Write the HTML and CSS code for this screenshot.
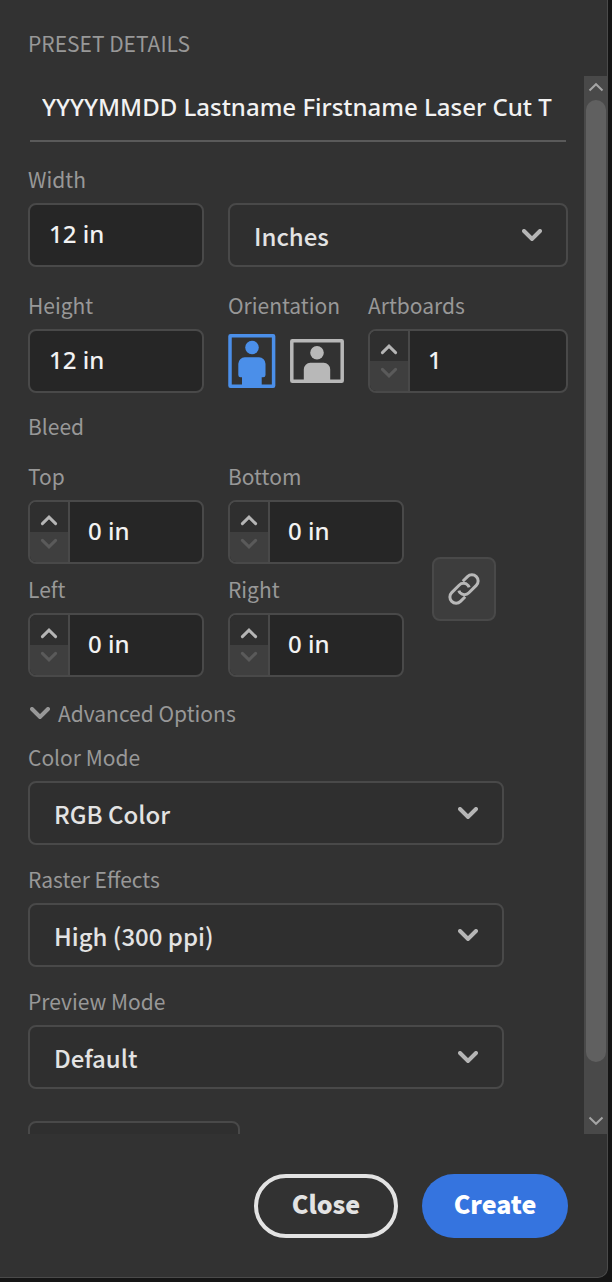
FILE: index.html
```html
<!DOCTYPE html>
<html lang="en">
<head>
<meta charset="utf-8">
<meta name="viewport" content="width=device-width, initial-scale=1">
<title>Preset Details</title>
<link rel="stylesheet" href="styles.css">
</head>
<body>
<svg width="0" height="0" class="symbols" aria-hidden="true">
  <symbol id="chevron" viewBox="0 0 20 12"><path d="M2 2l8 8 8-8"/></symbol>
  <symbol id="step-up" viewBox="0 0 18 12"><path d="M2.400 8.600L9 2.200l6.600 6.400"/></symbol>
  <symbol id="step-down" viewBox="0 0 18 12"><path d="M2.400 2.400L9 8.800l6.600-6.400"/></symbol>
</svg>
<main class="panel">
  <h1 class="panel-title">Preset Details</h1>
  <div class="viewport">
    <form class="form">
      <input class="doc-name" type="text" aria-label="Document name" value="YYYYMMDD Lastname Firstname Laser Cut T">

      <div class="row">
        <div class="field column">
          <label class="label" for="width">Width</label>
          <input class="box" id="width" type="text" value="12 in">
        </div>
        <div class="field grow">
          <div class="select">
            <select id="unit" aria-label="Units"><option>Inches</option></select>
            <svg class="arrow"><use href="#chevron"/></svg>
          </div>
        </div>
      </div>

      <div class="row">
        <div class="field column">
          <label class="label" for="height">Height</label>
          <input class="box" id="height" type="text" value="12 in">
        </div>
        <div class="field">
          <span class="label" id="orientation">Orientation</span>
          <div class="orientation" role="group" aria-labelledby="orientation">
            <button class="icon-button selected" type="button" aria-label="Portrait" aria-pressed="true">
              <svg width="48" height="54" viewBox="0 0 48 54"><rect x="2" y="1.800" width="43.600" height="50.400" rx=".5" fill="none" stroke="currentColor" stroke-width="3.500"/><circle cx="24" cy="13.500" r="6.800"/><path d="M17 23.300h14a6.500 6.500 0 0 1 6.500 6.500V41a2.300 2.300 0 0 1-2.300 2.300h-1.500V52H14v-8.700h-1.500A2.300 2.300 0 0 1 10.300 41V29.800a6.500 6.500 0 0 1 6.700-6.500z"/></svg>
            </button>
            <button class="icon-button" type="button" aria-label="Landscape" aria-pressed="false">
              <svg width="54" height="44" viewBox="0 0 54 44"><rect x="1.800" y="1.800" width="50.400" height="40.400" rx=".5" fill="none" stroke="currentColor" stroke-width="3.500"/><circle cx="27" cy="13.800" r="6.800"/><path d="M20.500 23.800h13.200a6.500 6.500 0 0 1 6.500 6.500V42H13.800V30.300a6.500 6.500 0 0 1 6.700-6.500z"/></svg>
            </button>
          </div>
        </div>
        <div class="field grow">
          <label class="label" for="artboards">Artboards</label>
          <div class="stepper">
            <div class="steps">
              <button type="button" aria-label="More artboards"><svg><use href="#step-up"/></svg></button>
              <button type="button" aria-label="Fewer artboards" disabled><svg><use href="#step-down"/></svg></button>
            </div>
            <input id="artboards" type="text" value="1">
          </div>
        </div>
      </div>

      <div class="bleed" role="group" aria-labelledby="bleed">
        <h2 class="label bleed-title" id="bleed">Bleed</h2>
        <div class="bleed-body">
          <div class="bleed-grid">
            <div class="field column">
              <label class="label" for="top">Top</label>
              <div class="stepper">
                <div class="steps">
                  <button type="button" aria-label="Increase top"><svg><use href="#step-up"/></svg></button>
                  <button type="button" aria-label="Decrease top" disabled><svg><use href="#step-down"/></svg></button>
                </div>
                <input id="top" type="text" value="0 in">
              </div>
            </div>
            <div class="field column">
              <label class="label" for="bottom">Bottom</label>
              <div class="stepper">
                <div class="steps">
                  <button type="button" aria-label="Increase bottom"><svg><use href="#step-up"/></svg></button>
                  <button type="button" aria-label="Decrease bottom" disabled><svg><use href="#step-down"/></svg></button>
                </div>
                <input id="bottom" type="text" value="0 in">
              </div>
            </div>
            <div class="field column">
              <label class="label" for="left">Left</label>
              <div class="stepper">
                <div class="steps">
                  <button type="button" aria-label="Increase left"><svg><use href="#step-up"/></svg></button>
                  <button type="button" aria-label="Decrease left" disabled><svg><use href="#step-down"/></svg></button>
                </div>
                <input id="left" type="text" value="0 in">
              </div>
            </div>
            <div class="field column">
              <label class="label" for="right">Right</label>
              <div class="stepper">
                <div class="steps">
                  <button type="button" aria-label="Increase right"><svg><use href="#step-up"/></svg></button>
                  <button type="button" aria-label="Decrease right" disabled><svg><use href="#step-down"/></svg></button>
                </div>
                <input id="right" type="text" value="0 in">
              </div>
            </div>
          </div>
          <button class="link-button" type="button" aria-label="Link bleed values">
            <svg width="34" height="34" viewBox="0 0 34 34"><path d="M15.800 9.300l4.700-4.700a6.200 6.200 0 0 1 8.800 8.800l-7.400 7.400a6.200 6.200 0 0 1-8.800 0q-.9-1-1.200-2.200"/><path d="M18.200 24.700l-4.700 4.700a6.200 6.200 0 0 1-8.800-8.800l7.400-7.400a6.200 6.200 0 0 1 8.800 0q.9 1 1.200 2.200"/></svg>
          </button>
        </div>
      </div>

      <button class="disclosure label" type="button" aria-expanded="true">
        <svg><use href="#chevron"/></svg>
        Advanced Options
      </button>

      <div class="advanced">
        <div class="field">
          <label class="label" for="color">Color Mode</label>
          <div class="select">
            <select id="color"><option>RGB Color</option></select>
            <svg class="arrow"><use href="#chevron"/></svg>
          </div>
        </div>
        <div class="field">
          <label class="label" for="raster">Raster Effects</label>
          <div class="select">
            <select id="raster"><option>High (300 ppi)</option></select>
            <svg class="arrow"><use href="#chevron"/></svg>
          </div>
        </div>
        <div class="field">
          <label class="label" for="preview">Preview Mode</label>
          <div class="select">
            <select id="preview"><option>Default</option></select>
            <svg class="arrow"><use href="#chevron"/></svg>
          </div>
        </div>
      </div>
      <button class="more" type="button" aria-label="More settings"></button>
    </form>
    <div class="scrollbar" aria-hidden="true">
      <svg width="16" height="10" viewBox="0 0 16 10"><path d="M1.500 8.500L8 2.200l6.500 6.300"/></svg>
      <div class="track"><div class="thumb"></div></div>
      <svg width="16" height="10" viewBox="0 0 16 10"><path d="M1.500 1.500L8 7.800l6.500-6.300"/></svg>
    </div>
  </div>
  <footer class="actions">
    <button class="action close" type="button">Close</button>
    <button class="action create" type="button">Create</button>
  </footer>
</main>
</body>
</html>
```
FILE: styles.css
```css
* {
  box-sizing: border-box;
}

body {
  margin: 0;
  height: 100vh;
  padding: 0 4px 4px 0;
  background: #151515;
  color: #e3e3e3;
  font-family: "Noto Sans CJK SC", "Noto Sans", sans-serif;
  font-size: 21px;
  overflow: hidden;
}

button,
input,
select {
  margin: 0;
  padding: 0;
  border: 0;
  background: none;
  color: inherit;
  font: inherit;
}

svg {
  display: block;
  flex: none;
}

.symbols {
  position: absolute;
}

.panel {
  display: flex;
  flex-direction: column;
  height: 100%;
  background: #323232;
  border: solid #4a4a4a;
  border-width: 0 1px 1px 0;
  border-radius: 0 0 10px 0;
}

.panel-title {
  flex: none;
  margin: 0;
  padding: 31px 28px 21px;
  color: #989898;
  font-size: 21px;
  font-weight: 400;
  line-height: 24px;
  text-transform: uppercase;
}

.viewport {
  display: flex;
  flex: 1;
  min-height: 0;
  overflow: hidden;
}

.form {
  flex: 1;
  min-width: 0;
  padding: 0 16px 0 28px;
}

.doc-name {
  display: block;
  width: calc(100% - 4px);
  height: 66px;
  margin: 0 2px;
  padding: 0 0 4px 12px;
  border-bottom: 2px solid #5a5a5a;
  color: #f2f2f2;
  font-family: "Noto Sans", sans-serif;
  font-size: 24px;
  font-weight: 500;
}

.row {
  display: flex;
  align-items: flex-end;
  gap: 24px;
  margin-top: 25px;
}

.row + .row {
  margin-top: 26px;
}

.field {
  display: flex;
  flex-direction: column;
  gap: 12px;
}

.column {
  flex: 0 1 176px;
  min-width: 0;
}

.grow {
  flex: 1;
  min-width: 0;
}

.label {
  margin: 0;
  color: #989898;
  font-size: 21px;
  font-weight: 400;
  line-height: 24px;
}

.box {
  width: 100%;
  height: 64px;
  padding: 0 19px 4px;
  border: 2px solid #494949;
  border-radius: 8px;
  background: #262626;
  color: #f2f2f2;
  font-family: "Noto Sans", sans-serif;
  font-size: 24px;
  font-weight: 500;
}

.select {
  position: relative;
}

.select select {
  appearance: none;
  display: block;
  width: 100%;
  height: 64px;
  padding: 0 56px 0 24px;
  border: 2px solid #494949;
  border-radius: 8px;
  background: #2f2f2f;
  font-size: 24px;
  font-weight: 500;
}

.arrow {
  position: absolute;
  top: 26px;
  right: 26px;
  pointer-events: none;
}

.arrow,
.disclosure svg {
  width: 20px;
  height: 12px;
  fill: none;
  stroke: #b5b5b5;
  stroke-width: 4;
  stroke-linecap: round;
}

.orientation {
  display: flex;
  align-items: center;
  gap: 14px;
  height: 64px;
}

.icon-button {
  color: #b8b8b8;
  fill: currentColor;
}

.icon-button.selected {
  color: #4b8fe9;
}

.stepper {
  display: flex;
  height: 64px;
  border: 2px solid #494949;
  border-radius: 8px;
  background: #262626;
  overflow: hidden;
}

.steps {
  display: grid;
  flex: 0 0 40px;
  grid-template-rows: 1fr 1fr;
  border-right: 2px solid #494949;
}

.steps button {
  display: flex;
  align-items: flex-end;
  justify-content: center;
  padding-bottom: 5px;
  background: #2f2f2f;
}

.steps button:disabled {
  align-items: flex-start;
  padding: 6px 0 0;
  background: #3f3f3f;
}

.steps svg {
  width: 18px;
  height: 12px;
  fill: none;
  stroke: #b5b5b5;
  stroke-width: 3;
  stroke-linecap: round;
}

.steps button:disabled svg {
  stroke: #5a5a5a;
}

.stepper input {
  flex: 1;
  width: 0;
  padding: 0 18px 4px;
  color: #f2f2f2;
  font-family: "Noto Sans", sans-serif;
  font-size: 24px;
  font-weight: 500;
}

.bleed-title {
  margin: 21px 0 26px;
}

.bleed-body {
  display: flex;
  align-items: center;
  gap: 28px;
}

.bleed-grid {
  display: grid;
  flex: 0 1 376px;
  grid-template-columns: 1fr 1fr;
  gap: 13px 24px;
}

.link-button {
  display: flex;
  flex: none;
  align-items: center;
  justify-content: center;
  width: 64px;
  height: 64px;
  margin-top: 36px;
  border: 2px solid #494949;
  border-radius: 8px;
  background: #3d3d3d;
}

.link-button svg {
  fill: none;
  stroke: #b8b8b8;
  stroke-width: 3;
}

.disclosure {
  display: flex;
  align-items: center;
  gap: 8px;
  margin-top: 24px;
  padding-left: 2px;
}

.disclosure svg {
  stroke: #989898;
}

.advanced {
  display: flex;
  flex-direction: column;
  gap: 22px;
  margin: 20px 64px 0 0;
}

.more {
  width: 212px;
  height: 64px;
  margin-top: 32px;
  border: 2px solid #494949;
  border-radius: 8px;
  background: #2f2f2f;
}

.scrollbar {
  display: flex;
  flex: 0 0 23px;
  flex-direction: column;
  align-items: center;
  gap: 8px;
  padding: 6px 0 8px;
  background: #494949;
}

.scrollbar svg {
  fill: none;
  stroke: #a5a5a5;
  stroke-width: 2;
}

.track {
  flex: 1;
}

.thumb {
  width: 20px;
  height: calc(95% + 4px);
  border-radius: 10px;
  background: #606060;
}

.actions {
  display: flex;
  flex: none;
  justify-content: flex-end;
  gap: 24px;
  padding: 40px 39px 39px 28px;
}

.action {
  height: 64px;
  padding: 0 28px 6px;
  border-radius: 32px;
  font-size: 25px;
  font-weight: 900;
}

.close {
  min-width: 144px;
  border: 4px solid #e3e3e3;
}

.create {
  min-width: 146px;
  background: #3574df;
  color: #ffffff;
}
```
